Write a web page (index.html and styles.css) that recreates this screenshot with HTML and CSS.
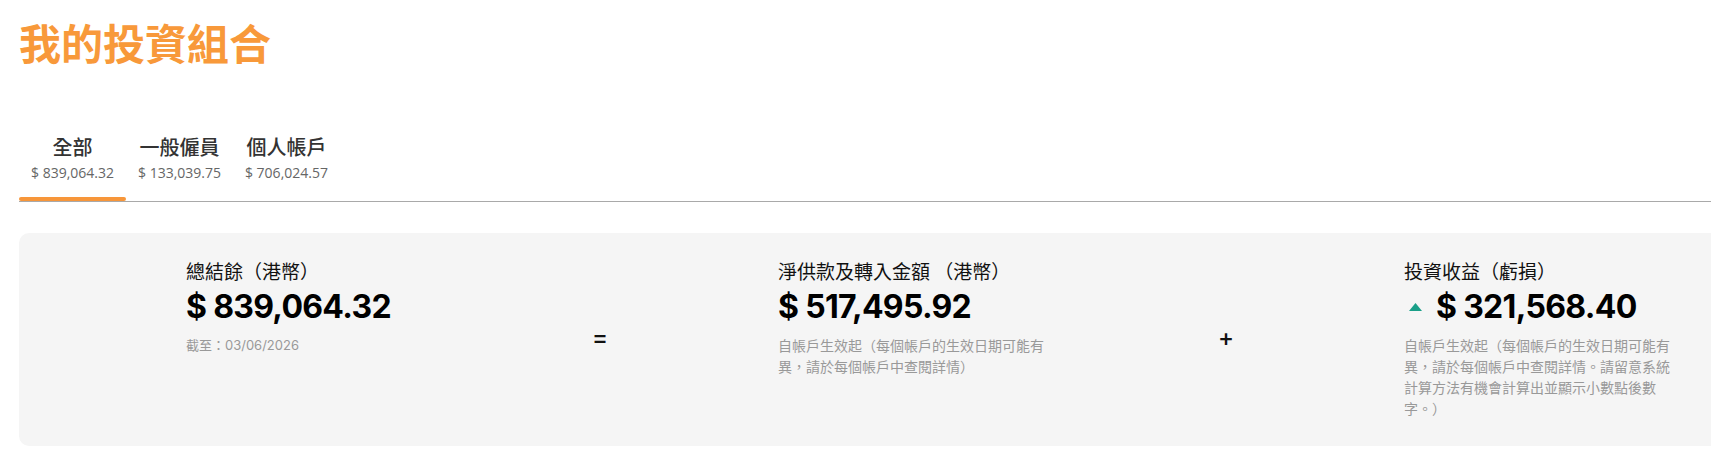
FILE: index.html
```html
<!DOCTYPE html>
<html lang="zh-Hant">
<head>
<meta charset="utf-8">
<title>我的投資組合</title>
<link rel="stylesheet" href="styles.css">
</head>
<body>
<div class="page">
  <h1 class="page-title">我的投資組合</h1>

  <div class="tabs">
    <div class="tab tab-active">
      <div class="tab-label">全部</div>
      <div class="tab-amount">$ 839,064.32</div>
      <div class="tab-bar"></div>
    </div>
    <div class="tab">
      <div class="tab-label">一般僱員</div>
      <div class="tab-amount">$ 133,039.75</div>
      <div class="tab-bar"></div>
    </div>
    <div class="tab">
      <div class="tab-label">個人帳戶</div>
      <div class="tab-amount">$ 706,024.57</div>
      <div class="tab-bar"></div>
    </div>
  </div>

  <div class="summary">
    <div class="cell cell-first">
      <div class="stat-title">總結餘（港幣）</div>
      <div class="stat-amount">$ 839,064.32</div>
      <div class="stat-note">截至：03/06/2026</div>
    </div>
    <div class="op">=</div>
    <div class="cell">
      <div class="stat-title">淨供款及轉入金額 （港幣）</div>
      <div class="stat-amount">$ 517,495.92</div>
      <div class="stat-note">自帳戶生效起（每個帳戶的生效日期可能有異，請於每個帳戶中查閱詳情）</div>
    </div>
    <div class="op">+</div>
    <div class="cell">
      <div class="stat-title">投資收益（虧損）</div>
      <div class="stat-amount stat-amount-up"><svg class="up-icon" width="13" height="8" viewBox="0 0 13 8"><path d="M6.5 0 L13 8 L0 8 Z" fill="#1a9f88"/></svg><span>$ 321,568.40</span></div>
      <div class="stat-note">自帳戶生效起（每個帳戶的生效日期可能有異，請於每個帳戶中查閱詳情。請留意系統計算方法有機會計算出並顯示小數點後數字。）</div>
    </div>
  </div>
</div>
</body>
</html>
```

FILE: styles.css
```css
html, body {
  margin: 0;
  padding: 0;
  background: #ffffff;
}

body {
  font-family: "Noto Sans CJK TC", "Noto Sans", sans-serif;
  color: #222222;
}

.page {
  padding: 12px 0 0 19px;
}

.page-title {
  margin: 0;
  font-family: "Noto Sans CJK TC", sans-serif;
  font-size: 42px;
  line-height: 60px;
  font-weight: 700;
  color: #f8993a;
}

.tabs {
  display: flex;
  margin-top: 61px;
  border-bottom: 1px solid #a9a9a9;
}

.tab {
  display: flex;
  flex-direction: column;
  align-items: center;
}

.tab-label {
  padding: 0 12px;
  font-family: "Noto Sans CJK TC", sans-serif;
  font-size: 20px;
  line-height: 28px;
  font-weight: 500;
  color: #333333;
}

.tab-amount {
  margin-top: 2px;
  padding: 0 12px;
  font-family: "Open Sans", "Noto Sans CJK TC", sans-serif;
  font-size: 14px;
  line-height: 19px;
  color: #666666;
}

.tab-bar {
  align-self: stretch;
  margin-top: 15px;
  height: 4px;
  border-radius: 2px;
  background: transparent;
}

.tab-active .tab-bar {
  background: #f7963a;
}

.summary {
  display: grid;
  grid-template-columns: 561px 40px 586px 40px 1fr;
  margin-top: 31px;
  padding: 24px 0 27px 0;
  background: #f5f5f5;
  border-radius: 10px 0 0 10px;
  align-items: start;
}

.cell {
  padding-left: 158px;
}

.cell-first {
  padding-left: 167px;
}

.stat-title {
  font-family: "Noto Sans CJK TC", sans-serif;
  font-size: 19px;
  line-height: 27px;
  color: #111111;
}

.stat-amount {
  margin-top: 3px;
  font-family: "Inter", "Noto Sans CJK TC", sans-serif;
  font-size: 32px;
  line-height: 40px;
  font-weight: 700;
  letter-spacing: -0.7px;
  color: #000000;
  white-space: nowrap;
}

.stat-amount-up {
  display: flex;
  align-items: center;
}

.up-icon {
  flex: none;
  margin: 0 14px 0 5px;
}

.stat-note {
  margin-top: 8px;
  width: 276px;
  font-family: "Inter", "Noto Sans CJK TC", sans-serif;
  font-size: 14px;
  line-height: 21px;
  color: #999999;
}

.cell-first .stat-note {
  font-size: 13px;
}

.op {
  align-self: center;
  text-align: center;
  font-family: "Inter", sans-serif;
  font-size: 24px;
  line-height: 24px;
  font-weight: 500;
  color: #111111;
}
```
